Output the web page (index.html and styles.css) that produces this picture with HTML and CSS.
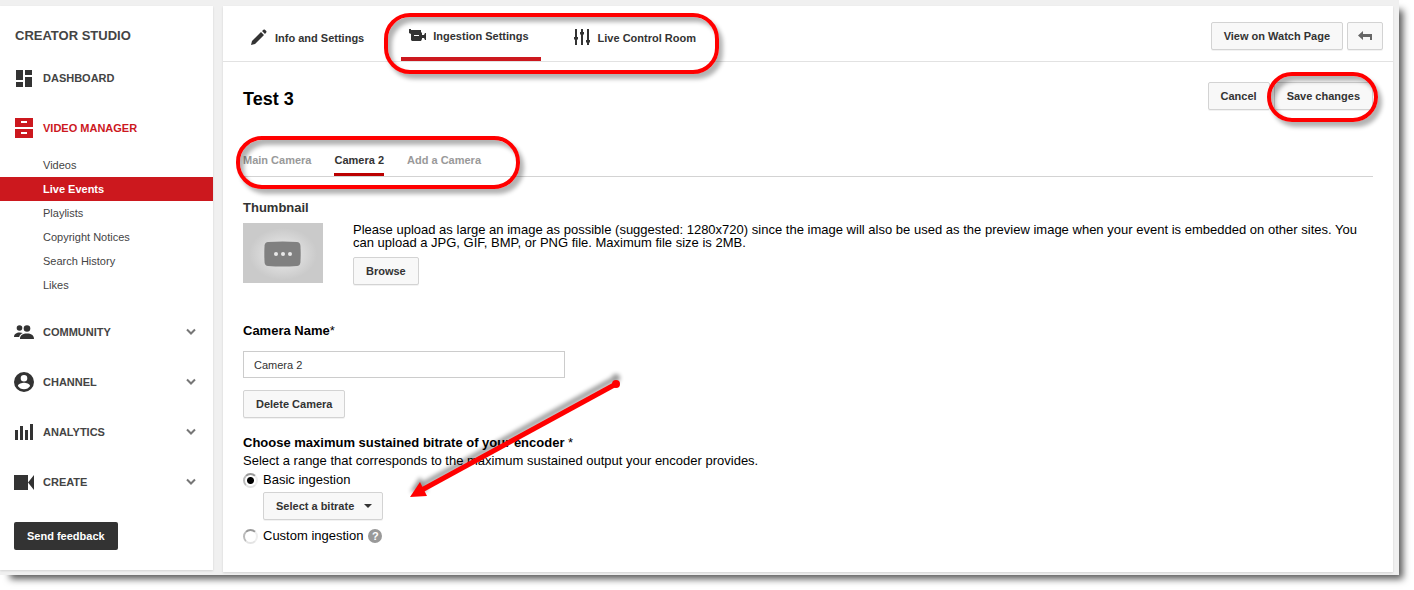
FILE: index.html
```html
<!DOCTYPE html>
<html lang="en">
<head>
<meta charset="utf-8">
<title>Creator Studio - Ingestion Settings</title>
<link rel="stylesheet" href="styles.css">
</head>
<body>
<div class="frame">
  <aside class="sidebar">
    <h1 class="brand">CREATOR STUDIO</h1>
    <nav class="nav">
      <a class="nav-row" href="#"><svg class="nav-icon" viewBox="0 0 20 20"><path d="M2 2h7v10H2zM2 14h7v5H2zM11 2h7v5h-7zM11 9h7v10h-7z"/></svg>DASHBOARD</a>
      <a class="nav-row nav-current" href="#"><svg class="nav-icon" viewBox="0 0 20 20"><path fill-rule="evenodd" d="M1 0h18v9H1zM7 3v2h6V3zM1 11h18v9H1zM7 14v2h6v-2z"/></svg>VIDEO MANAGER</a>
      <ul class="subnav">
        <li><a href="#">Videos</a></li>
        <li><a class="selected" href="#">Live Events</a></li>
        <li><a href="#">Playlists</a></li>
        <li><a href="#">Copyright Notices</a></li>
        <li><a href="#">Search History</a></li>
        <li><a href="#">Likes</a></li>
      </ul>
      <a class="nav-row" href="#"><svg class="nav-icon" viewBox="0 0 20 20"><circle cx="5.500" cy="6" r="2.800"/><circle cx="13" cy="6.500" r="3.300"/><path d="M0 15c0-3 2.500-4.500 5.500-4.500 1.300 0 2.500.2 3.300.6C6.800 12 5.500 13.300 5.200 15zM6 17c0-4 3-5.500 7-5.500s7 1.500 7 5.500z"/></svg>COMMUNITY<svg class="chevron" viewBox="0 0 10 8"><path d="M1 1.500l4 4 4-4"/></svg></a>
      <a class="nav-row" href="#"><svg class="nav-icon" viewBox="0 0 20 20"><path fill-rule="evenodd" d="M10 0a10 10 0 1 0 0 20 10 10 0 0 0 0-20zM10 3a3.300 3.300 0 1 1 0 6.600A3.300 3.300 0 0 1 10 3zM10 17.200c-2.600 0-4.800-1.300-6.100-3.300.1-2 4.100-3.100 6.100-3.100s6 1.100 6.100 3.100c-1.300 2-3.500 3.300-6.100 3.300z"/></svg>CHANNEL<svg class="chevron" viewBox="0 0 10 8"><path d="M1 1.500l4 4 4-4"/></svg></a>
      <a class="nav-row" href="#"><svg class="nav-icon" viewBox="0 0 20 20"><path d="M1 8h3v10H1zM6 4h3v14H6zM11 8h3v10h-3zM16 2h3v16h-3z"/></svg>ANALYTICS<svg class="chevron" viewBox="0 0 10 8"><path d="M1 1.500l4 4 4-4"/></svg></a>
      <a class="nav-row" href="#"><svg class="nav-icon" viewBox="0 0 20 20"><path d="M0 3h14v15H0zM20 3v15l-6-7.500z"/></svg>CREATE<svg class="chevron" viewBox="0 0 10 8"><path d="M1 1.500l4 4 4-4"/></svg></a>
    </nav>
    <button class="feedback" type="button">Send feedback</button>
  </aside>

  <main class="main">
    <header class="topbar">
      <nav class="tabs">
        <a class="tab" href="#"><svg class="tab-icon" viewBox="0 0 18 18"><path d="M0 16l1-4L10 3l3 3L4 15zM11 2l1.500-1.200c.5-.4 1-.4 1.400 0l1.300 1.300c.4.4.4 1 0 1.400L14 5z"/></svg>Info and Settings</a>
        <a class="tab tab-active" href="#"><svg class="tab-icon" viewBox="0 0 18 18"><path fill-rule="evenodd" d="M0 2h2v1h10v2l1 1v2h2l1-2h1v7h-1l-1-2h-2v1l-1 2H3l-1-1V7L0 6zM5 8v1h5V8z"/></svg>Ingestion Settings</a>
        <a class="tab" href="#"><svg class="tab-icon" viewBox="0 0 18 18"><path d="M1 0h2v16H1zM7 0h2v16H7zM13 0h2v16h-2zM0 8h4v2L3 11H1L0 10zM6 3h4v2L9 6H7L6 5zM12 11h4v2l-1 1h-2l-1-1z"/></svg>Live Control Room</a>
        <span class="ring ring-tabs"></span>
      </nav>
      <div class="top-actions">
        <button class="button" type="button">View on Watch Page</button>
        <button class="button button-icon" type="button" aria-label="Back"><svg class="back-icon" viewBox="0 0 14 10"><path d="M0 4.500L5 0v3h9v6h-2V6H5v3z"/></svg></button>
      </div>
    </header>

    <section class="content">
      <div class="title-row">
        <h2 class="title">Test 3</h2>
        <div class="title-actions">
          <button class="button" type="button">Cancel</button>
          <button class="button" type="button">Save changes</button>
          <span class="ring ring-save"></span>
        </div>
      </div>

      <nav class="cameras">
        <a class="camera" href="#">Main Camera</a>
        <a class="camera camera-active" href="#">Camera 2</a>
        <a class="camera" href="#">Add a Camera</a>
        <span class="ring ring-cameras"></span>
      </nav>

      <h3 class="thumb-label">Thumbnail</h3>
      <div class="thumb-row">
        <svg class="thumb" viewBox="0 0 80 60"><defs><radialGradient id="glow"><stop offset=".5" stop-color="#dcdcdc"/><stop offset="1" stop-color="#cacaca"/></radialGradient></defs><path fill="#cacaca" d="M0 0h80v60H0z"/><ellipse cx="40" cy="31" rx="34" ry="26" fill="url(#glow)"/><path fill="#808080" d="M25 19q15-1 29 0 3 .3 3.400 3.500.6 8.500 0 17-.4 3.200-3.400 3.500-14.500 1-29 0-3-.3-3.400-3.500-.6-8.500 0-17Q22 19.300 25 19z"/><g fill="#e8e8e8"><circle cx="33" cy="31" r="2"/><circle cx="40" cy="31" r="2"/><circle cx="47" cy="31" r="2"/></g></svg>
        <div class="thumb-info">
          <p class="hint">Please upload as large an image as possible (suggested: 1280x720) since the image will also be used as the preview image when your event is embedded on other sites. You can upload a JPG, GIF, BMP, or PNG file. Maximum file size is 2MB.</p>
          <button class="button" type="button">Browse</button>
        </div>
      </div>

      <label class="field-label" for="camera-name">Camera Name<span class="star">*</span></label>
      <input class="text-input" id="camera-name" type="text" value="Camera 2">
      <button class="button delete" type="button">Delete Camera</button>

      <div class="encoder" role="radiogroup" aria-labelledby="bitrate-label">
        <h3 class="encoder-label" id="bitrate-label">Choose maximum sustained bitrate of your encoder <span class="star">*</span></h3>
        <p class="encoder-text">Select a range that corresponds to the maximum sustained output your encoder provides.</p>
        <label class="radio-row"><input class="radio" type="radio" name="ingestion" checked>Basic ingestion</label>
        <div class="select-wrap">
          <select class="button select" aria-label="Bitrate"><option>Select a bitrate</option></select>
        </div>
        <div class="radio-line">
          <label class="radio-row"><input class="radio" type="radio" name="ingestion">Custom ingestion</label>
          <span class="help">?</span>
        </div>
        <svg class="arrow" viewBox="0 0 220 130"><g class="arrow-shadow"><path d="M210 5L16 112" stroke="#000" stroke-width="5"/><circle cx="210" cy="5" r="4"/><path d="M4 119l10-15 8 14z"/></g><g fill="#f00"><path d="M210 11L14 118" stroke="#f00" stroke-width="5"/><circle cx="210" cy="11" r="4"/><path d="M4 124l10-15 7 14z"/></g></svg>
      </div>
    </section>
  </main>
</div>
</body>
</html>
```

FILE: styles.css
```css
* { box-sizing: border-box; }

body {
  margin: 0;
  background: #fff;
  color: #000;
  font: 13px/16px "Liberation Sans", Arial, sans-serif;
}

h1, h2, h3, p, ul { margin: 0; padding: 0; }
ul { list-style: none; }
a { color: inherit; text-decoration: none; }
svg { display: block; flex: none; }

.frame {
  display: grid;
  grid-template-columns: 213px 1fr;
  align-items: start;
  gap: 10px;
  margin: 0 15px 15px 0;
  padding: 6px 6px 3px 0;
  background: #f0f0f0;
  box-shadow: 7px 7px 7px -3px rgba(0, 0, 0, .65);
}

.sidebar, .main {
  background: #fff;
  box-shadow: 0 1px 2px rgba(0, 0, 0, .12);
}

/* Sidebar */
.sidebar { padding: 22px 0 20px; color: #444; }
.brand { padding-left: 15px; font-size: 13px; line-height: 16px; margin-bottom: 9px; }

.nav-row {
  display: flex;
  align-items: center;
  gap: 9px;
  height: 50px;
  padding: 0 17px 0 14px;
  font-size: 11px;
  font-weight: bold;
}
.nav-icon { width: 20px; height: 20px; fill: #333; }
.nav-current { color: #cc181e; }
.nav-current .nav-icon { fill: #cc181e; }
.chevron {
  width: 10px;
  height: 8px;
  margin-left: auto;
  fill: none;
  stroke: #777;
  stroke-width: 2;
}

.subnav { margin-bottom: 10px; font-size: 11px; line-height: 24px; }
.subnav a { display: block; padding-left: 43px; }
.subnav .selected { background: #cc181e; color: #fff; font-weight: bold; }

.feedback {
  display: block;
  height: 28px;
  margin: 15px 0 0 14px;
  padding: 0 13px;
  border: 0;
  border-radius: 2px;
  background: #333;
  color: #fff;
  font: bold 11px "Liberation Sans", Arial, sans-serif;
}

/* Shared controls */
.button {
  height: 28px;
  padding: 0 12px;
  border: 1px solid #d3d3d3;
  border-radius: 2px;
  background: #f8f8f8;
  box-shadow: 0 1px 0 rgba(0, 0, 0, .05);
  color: #333;
  font: bold 11px "Liberation Sans", Arial, sans-serif;
}

/* Top bar */
.topbar {
  display: flex;
  justify-content: space-between;
  height: 56px;
  padding: 0 10px 0 20px;
  border-bottom: 1px solid #e2e2e2;
}
.tabs { position: relative; display: flex; gap: 25px; }
.tab {
  display: flex;
  align-items: center;
  gap: 6px;
  height: 55px;
  padding: 8px 12px 0 8px;
  border-bottom: 0 solid #cc181e;
  color: #333;
  font-size: 11px;
  font-weight: bold;
}
.tab-active { border-bottom-width: 4px; }
.tab-icon { width: 18px; height: 18px; fill: #333; }
.top-actions { display: flex; gap: 4px; padding-top: 16px; }
.button-icon { width: 36px; padding: 0 10px; }
.back-icon { width: 14px; height: 10px; fill: #666; }

/* Page content */
.content { padding: 20px 20px 24px; }
.title-row { display: flex; justify-content: space-between; align-items: center; height: 28px; }
.title { padding-top: 6px; font-size: 18px; line-height: 20px; }
.title-actions { position: relative; display: flex; gap: 4px; }

.cameras {
  position: relative;
  display: flex;
  gap: 23px;
  height: 67px;
  border-bottom: 1px solid #d3d3d3;
  font-size: 11px;
  font-weight: bold;
}
.camera { padding-top: 42px; color: #999; }
.camera-active { border-bottom: 3px solid #b00; color: #333; }

.thumb-label { margin: 23px 0 7px; color: #333; font-size: 13px; line-height: 16px; }
.thumb-row { display: flex; gap: 30px; margin-bottom: 38px; }
.thumb { width: 80px; height: 60px; }
.thumb-info { flex: 1; padding-right: 16px; }
.hint { margin-bottom: 8px; line-height: 13px; text-align: justify; }

.field-label { display: block; margin-bottom: 12px; font-weight: bold; }
.star { font-weight: normal; }
.text-input {
  display: block;
  width: 322px;
  height: 27px;
  padding: 0 10px;
  border: 1px solid #ccc;
  background: #fff;
  color: #333;
  font: 11px "Liberation Sans", Arial, sans-serif;
}
.delete { display: block; margin: 12px 0 17px; }

.encoder { position: relative; }
.encoder-label { font-size: 13px; line-height: 16px; }
.encoder-text { padding-top: 2px; line-height: 15px; }
.radio-row { display: flex; align-items: center; gap: 5px; height: 24px; }
.radio {
  appearance: none;
  width: 15px;
  height: 15px;
  margin: 0;
  border: 2px solid;
  border-color: #999 #eee #e4e4e4 #bbb;
  border-radius: 50%;
  background: #fff;
}
.radio:checked { background: radial-gradient(#000 0 3px, #fff 4px); }
.select-wrap { position: relative; width: 120px; margin-left: 20px; }
.select { appearance: none; width: 100%; }
.select-wrap::after {
  content: "";
  position: absolute;
  top: 12px;
  right: 11px;
  border: 4px solid transparent;
  border-top-color: #333;
  border-bottom-width: 0;
  pointer-events: none;
}
.radio-line { display: flex; align-items: center; gap: 5px; padding-top: 4px; }
.help {
  width: 14px;
  height: 14px;
  border-radius: 50%;
  background: #999;
  color: #fff;
  font-size: 11px;
  font-weight: bold;
  line-height: 14px;
  text-align: center;
}

/* Callouts drawn over the page */
.ring {
  position: absolute;
  border: 4px solid #f00;
  border-radius: 26px;
  box-shadow: 4px 5px 4px rgba(0, 0, 0, .3), inset 4px 5px 4px rgba(0, 0, 0, .3);
  pointer-events: none;
}
.ring-tabs { left: 141px; top: 7px; width: 335px; height: 61px; }
.ring-save { right: -5px; top: -10px; width: 111px; height: 50px; }
.ring-cameras { left: -7px; top: 26px; width: 284px; height: 53px; }
.arrow {
  position: absolute;
  left: 163px;
  top: -62px;
  width: 220px;
  height: 130px;
  overflow: visible;
  pointer-events: none;
}
.arrow-shadow { opacity: .4; filter: blur(2px); }
```
